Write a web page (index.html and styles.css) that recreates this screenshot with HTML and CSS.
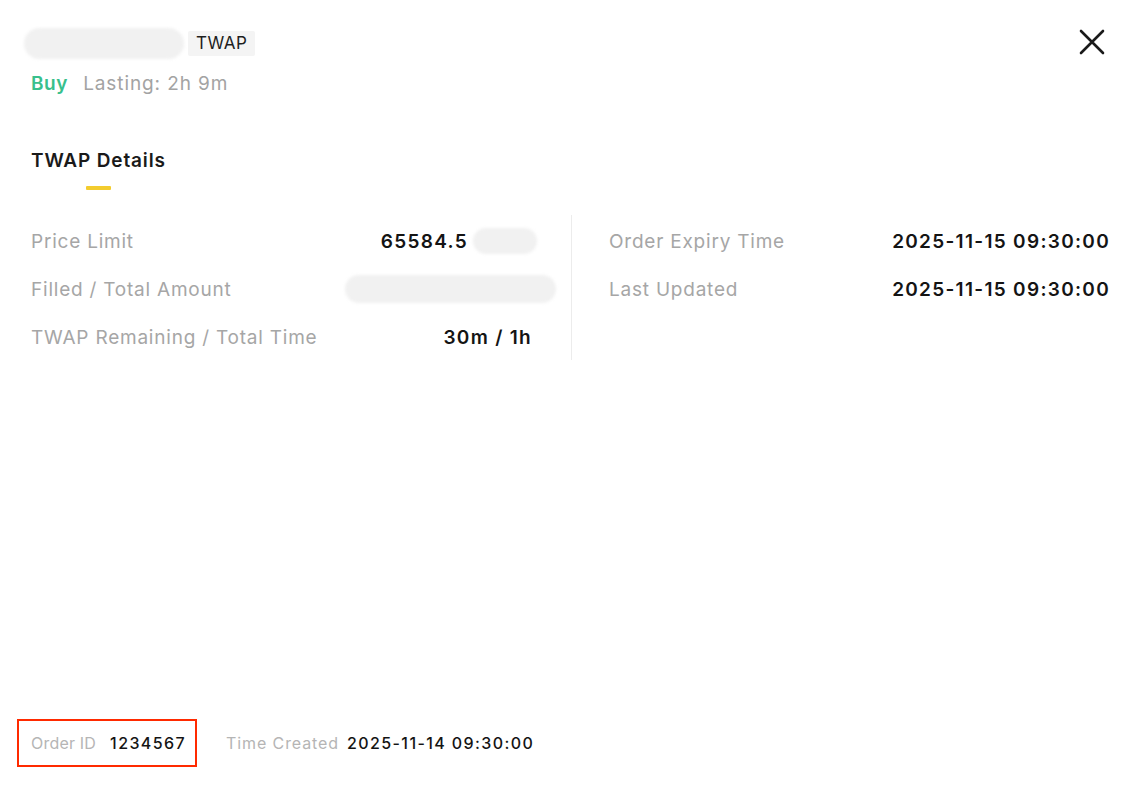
FILE: index.html
```html
<!DOCTYPE html>
<html lang="en">
<head>
<meta charset="utf-8">
<title>TWAP Order</title>
<link rel="stylesheet" href="styles.css">
</head>
<body>
<div class="panel">
  <header class="head">
    <div class="head-main">
      <div class="title-row">
        <div class="blur-pill symbol"></div>
        <span class="tag">TWAP</span>
      </div>
      <div class="sub-row">
        <span class="side">Buy</span>
        <span class="lasting">Lasting: 2h 9m</span>
      </div>
    </div>
    <button class="close" aria-label="Close">
      <svg width="26" height="26" viewBox="0 0 26 26"><path d="M2 2 L24 24 M24 2 L2 24" stroke="#1a1a1a" stroke-width="2.6" stroke-linecap="round" fill="none"/></svg>
    </button>
  </header>

  <nav class="tabs">
    <div class="tab active">TWAP Details</div>
  </nav>

  <section class="details">
    <div class="col col-left">
      <div class="row"><span class="label">Price Limit</span><span class="value">65584.5<span class="blur-pill unit"></span></span></div>
      <div class="row"><span class="label">Filled / Total Amount</span><span class="value"><span class="blur-pill amount"></span></span></div>
      <div class="row"><span class="label">TWAP Remaining / Total Time</span><span class="value time">30m / 1h</span></div>
    </div>
    <div class="divider"></div>
    <div class="col col-right">
      <div class="row"><span class="label">Order Expiry Time</span><span class="value">2025-11-15 09:30:00</span></div>
      <div class="row"><span class="label">Last Updated</span><span class="value">2025-11-15 09:30:00</span></div>
    </div>
  </section>

  <footer class="foot">
    <div class="meta highlighted"><span class="meta-label">Order ID</span><span class="meta-value">1234567</span></div>
    <div class="meta created"><span class="meta-label">Time Created</span><span class="meta-value">2025-11-14 09:30:00</span></div>
  </footer>
</div>
</body>
</html>
```
FILE: styles.css
```css
* { box-sizing: border-box; }
html, body { margin: 0; padding: 0; background: #fff; }
body {
  font-family: "Inter", "Liberation Sans", sans-serif;
  color: #121212;
  width: 1130px;
  height: 785px;
  overflow: hidden;
}
.panel {
  height: 785px;
  display: flex;
  flex-direction: column;
  padding: 26px 20px 18px 0;
}
.head {
  display: flex;
  justify-content: space-between;
  align-items: flex-start;
  padding-left: 24px;
}
.title-row {
  display: flex;
  align-items: center;
  gap: 4px;
  height: 34px;
}
.blur-pill {
  display: inline-block;
  background: #f1f1f1;
  border-radius: 16px;
  filter: blur(1.5px);
}
.symbol { width: 160px; height: 31px; }
.tag {
  background: #f4f4f4;
  font-size: 17px;
  letter-spacing: 0.5px;
  line-height: 25px;
  padding: 0 8px;
  border-radius: 2px;
  color: #1e1e1e;
}
.sub-row {
  display: flex;
  gap: 15px;
  padding-left: 7px;
  margin-top: 13px;
  font-size: 19px;
  line-height: 22px;
}
.side { color: #38c08c; font-weight: 600; letter-spacing: 0.6px; }
.lasting { color: #a3a3a3; letter-spacing: 0.9px; }
.close {
  border: 0;
  background: none;
  padding: 0;
  margin-top: 3px;
  margin-right: 5px;
  width: 26px;
  height: 26px;
  cursor: pointer;
}
.close svg { display: block; }

.tabs {
  display: flex;
  padding-left: 31px;
  margin-top: 55px;
}
.tab {
  font-size: 19px;
  letter-spacing: 0.85px;
  line-height: 22px;
  font-weight: 600;
  color: #1a1a1a;
  position: relative;
  padding-bottom: 18px;
}
.tab.active::after {
  content: "";
  position: absolute;
  left: 50%;
  bottom: 0;
  width: 25px;
  height: 4px;
  margin-left: -12px;
  background: #f3cc2e;
  border-radius: 1px;
}

.details {
  display: flex;
  margin-top: 27px;
  padding-left: 31px;
}
.col { display: flex; flex-direction: column; }
.col-left { width: 506px; }
.col-right { flex: 1; }
.divider {
  width: 1px;
  background: #ececec;
  margin: -2px 37px 0 34px;
  height: 145px;
}
.row {
  height: 48px;
  display: flex;
  align-items: center;
  justify-content: space-between;
  font-size: 19px;
}
.label { color: #a6a6a6; letter-spacing: 0.78px; }
.value {
  display: flex;
  align-items: center;
  font-weight: 600;
  color: #141414;
  letter-spacing: 1.3px;
}
.value.time { padding-right: 5px; }
.unit { width: 64px; height: 26px; margin-left: 5px; }
.amount { width: 211px; height: 28px; margin-right: -19px; }

.foot {
  margin-top: auto;
  display: flex;
  align-items: center;
  gap: 29px;
  padding-left: 17px;
}
.meta {
  display: flex;
  align-items: center;
  gap: 14px;
  font-size: 16px;
  height: 48px;
}
.highlighted { border: 2px solid #ff2a00; padding-left: 12px; padding-right: 9px; }
.meta-label { color: #b5b5b5; letter-spacing: 0.2px; }
.meta-value { color: #141414; font-weight: 500; letter-spacing: 1.4px; }
.created { gap: 8px; }
.created .meta-label { letter-spacing: 0.9px; }
```
